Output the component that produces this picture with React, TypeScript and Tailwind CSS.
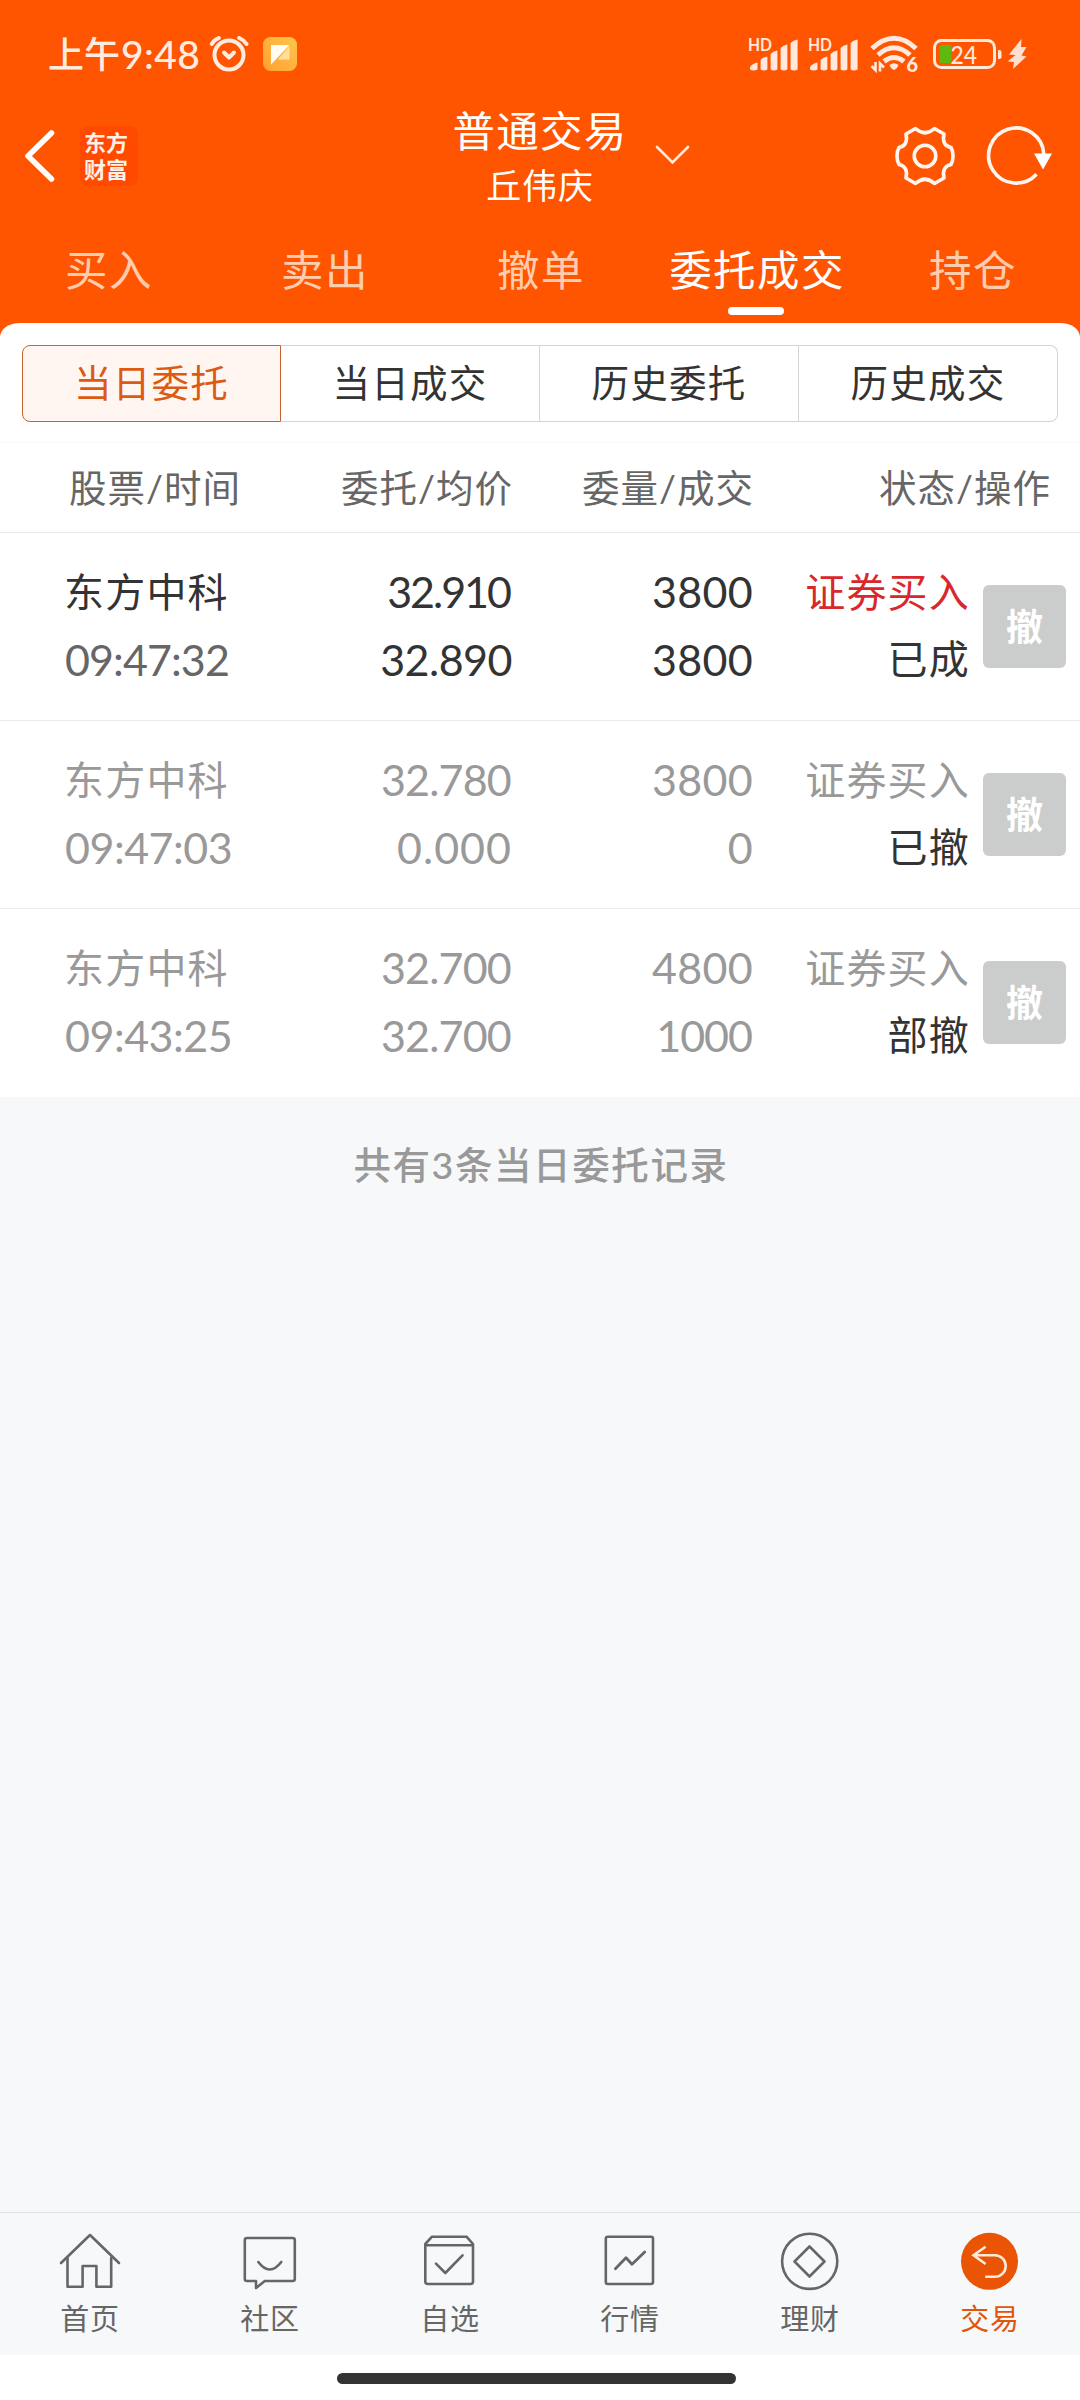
import React, { useState } from 'react';

interface Order {
  name: string;
  time: string;
  price: string;
  avg: string;
  amount: string;
  filled: string;
  status: string;
  active: boolean;
}

const orders: Order[] = [
  { name: '东方中科', time: '09:47:32', price: '32.910', avg: '32.890', amount: '3800', filled: '3800', status: '已成', active: true },
  { name: '东方中科', time: '09:47:03', price: '32.780', avg: '0.000', amount: '3800', filled: '0', status: '已撤', active: false },
  { name: '东方中科', time: '09:43:25', price: '32.700', avg: '32.700', amount: '4800', filled: '1000', status: '部撤', active: false },
];

const tabs = ['买入', '卖出', '撤单', '委托成交', '持仓'];
const segments = ['当日委托', '当日成交', '历史委托', '历史成交'];

const figureSpacing = (v: string) => {
  if (v.includes('1')) return 'tracking-[-2px] pr-[2px]';
  if (v.startsWith('0.')) return 'tracking-[1px]';
  if (v.includes('7')) return 'tracking-[-0.800px] pr-px';
  return 'tracking-[-0.500px]';
};

const Signal = () => (
  <svg width="52" height="36" viewBox="0 0 52 36" fill="#ffe8dc">
    <text x="0" y="14.500" fontSize="16.500" fontWeight="700" fontFamily="Lato" textLength="24" lengthAdjust="spacingAndGlyphs">HD</text>
    <path d="M2 33.500V31Q5 27 9.500 26.500V33.500Q5.500 35.500 2 33.500Z" />
    <path d="M12.600 33.500V24Q15 21 19.400 20.500V33.500Q16 35.500 12.600 33.500Z" />
    <path d="M22.600 33.500V18Q25 15 29.400 14.500V33.500Q26 35.500 22.600 33.500Z" />
    <path d="M32.600 33.500V12Q35 9 39.400 8.500V33.500Q36 35.500 32.600 33.500Z" />
    <path d="M42.600 33.500V7Q45 4 49.600 3.500V33.500Q46 35.500 42.600 33.500Z" />
  </svg>
);

const StatusBar = () => (
  <div className="h-[104px] flex items-center pt-1 pl-[48px] pr-[52px] text-[#ffece0]">
    <span className="text-[36px] leading-[44px] font-medium">上午</span>
    <span className="text-[39px] leading-[44px] ml-[1px] tracking-[0.400px] font-medium">9:48</span>
    <svg className="ml-[9px]" width="40" height="36" viewBox="0 0 40 36" fill="none" stroke="#ffece0" strokeWidth="4" strokeLinecap="round">
      <circle cx="20" cy="19" r="14.500" />
      <path d="M2.800 8Q5 4 9.800 2M30.200 2Q35 4 37.500 8" strokeWidth="4" />
      <path d="M15 16.500L20 21.500L25 16.500" strokeLinejoin="round" />
    </svg>
    <svg className="ml-[14px]" width="34" height="34" viewBox="0 0 34 34">
      <defs>
        <linearGradient id="note" x1="1" y1="0" x2="0" y2="1">
          <stop offset="0" stopColor="#ffc64a" />
          <stop offset="1" stopColor="#ff9f35" />
        </linearGradient>
      </defs>
      <rect width="34" height="34" rx="7.500" fill="url(#note)" />
      <path d="M26.500 9V22.500H15Z" fill="#ffdf9a" />
      <path d="M8 8H26.500L8 27.500Z" fill="#fffdf2" />
    </svg>
    <div className="ml-auto flex items-center">
      <Signal />
      <div className="w-2" />
      <Signal />
      <svg className="ml-[10px]" width="50" height="40" viewBox="0 -1 50 40" fill="none" stroke="#ffe8dc" strokeWidth="5">
        <path d="M2 13.500Q24 -7 46 13.500" />
        <path d="M8 20Q24 5.500 40 20" />
        <path d="M14 26.500Q24 18.500 34 26.500" />
        <path d="M19.500 30Q24 26.500 28.500 30Q27 34 24 35Q21 34 19.500 30Z" fill="#ffe8dc" stroke="none" />
        <path d="M5.500 27V35L1.500 31M10 36.500V28.500L14 32.500" strokeWidth="2.600" />
        <text x="36.500" y="36.500" fontSize="20" fontWeight="900" fontFamily="Lato" fill="#ffe8dc" stroke="none">6</text>
      </svg>
      <svg className="ml-[12px]" width="96" height="32" viewBox="0 0 96 32">
        <rect x="2.500" y="2.500" width="60" height="27" rx="7" fill="none" stroke="#ffe8dc" strokeWidth="3" />
        <path d="M66 12Q69.500 11.500 69.500 14V19Q69.500 21 66 21Z" fill="#ffe8dc" />
        <rect x="7.500" y="7" width="12" height="18" rx="2.500" fill="#5fb80f" />
        <text x="18.500" y="25.500" fontSize="25.500" fontFamily="Lato" fontWeight="500" fill="#ffe8dc" textLength="26.500" lengthAdjust="spacingAndGlyphs">24</text>
        <path d="M89.500 1L77 16.500L83.500 17L75.500 23.500L82 24L81 31L94.500 18.500L89.500 17.500L94.500 9L89 9Z" fill="#ffe0d0" />
      </svg>
    </div>
  </div>
);

const TitleBar = () => (
  <div className="h-[108px] grid grid-cols-3 items-center text-white">
    <div className="flex items-center pl-[22px] pb-[4px]">
      <svg width="36" height="56" viewBox="0 0 36 56" fill="none" stroke="#fff" strokeWidth="5.500" strokeLinecap="round" strokeLinejoin="round">
        <path d="M29.500 5L6 28L29.500 51" />
      </svg>
      <div className="ml-[22px] w-[58px] h-[60px] rounded-lg bg-[#ff4a00] pl-[4px] pt-[3px] text-[22px] leading-[27px] font-bold text-[#fff0e8]">
        <div>东方</div>
        <div>财富</div>
      </div>
    </div>
    <div className="relative text-center">
      <div className="text-[42.500px] leading-[54px] tracking-[1.200px]">普通交易</div>
      <div className="text-[35px] leading-[54px] tracking-[0.800px]">丘伟庆</div>
      <svg className="absolute left-[294px] top-[40px]" width="38" height="22" viewBox="0 0 38 22" fill="none" stroke="#ffefe5" strokeWidth="2.600" strokeLinecap="round">
        <path d="M3 3L18.500 18.500L34 3" />
      </svg>
    </div>
    <div className="flex items-center justify-end pr-[24px] pb-[5px]">
      <svg width="64" height="64" viewBox="-32 -32 64 64" fill="none" stroke="#fff5ee" strokeWidth="3.600" strokeLinejoin="round">
        <path d="M-9.500 -27.500Q0 -19 9.500 -27.500L19 -22Q16.500 -10.500 26 -8.500Q28 -5 28 0Q28 5 26 8.500Q16.500 10.500 19 22L9.500 27.500Q0 19 -9.500 27.500L-19 22Q-16.500 10.500 -26 8.500Q-28 5 -28 0Q-28 -5 -26 -8.500Q-16.500 -10.500 -19 -22Z" />
        <circle r="10.800" />
      </svg>
      <svg className="ml-[27px]" width="72" height="64" viewBox="-32 -32 72 64" fill="none" stroke="#fff5ee" strokeWidth="3.600">
        <path d="M20.500 18.300A27.600 27.600 0 1 1 27.800 -2" />
        <path d="M18 -2.500H36L27 13.500Z" fill="#fff" stroke="none" />
      </svg>
    </div>
  </div>
);

const navItems = [
  {
    label: '首页',
    icon: (
      <>
        <path d="M3 33L32 5L61 33" />
        <path d="M9.500 28V56.700H24.600V36H38.400V56.700H53.200V28" />
      </>
    ),
  },
  {
    label: '社区',
    icon: (
      <>
        <path d="M9 8H54.500Q56.800 8 56.800 10V49Q56.800 51 54.500 51H26.800L18 58V51H9Q6.800 51 6.800 49V10Q6.800 8 9 8Z" />
        <path d="M20.300 32Q31.600 47 43.300 32" />
      </>
    ),
  },
  {
    label: '自选',
    icon: (
      <>
        <path d="M7.300 15.300H55V51.500Q55 54 52.500 54H10Q7.300 54 7.300 51.500V14L14 6.700H48.500L55 14V15.300" />
        <path d="M18 33.700L27.300 43L44.500 25.300" />
      </>
    ),
  },
  {
    label: '行情',
    icon: (
      <>
        <rect x="7.800" y="6.700" width="47.200" height="47.300" rx="2" />
        <path d="M17.400 38.700L28 27.700L34 34.300L46.700 22" strokeWidth="2.800" />
      </>
    ),
  },
  {
    label: '理财',
    icon: (
      <>
        <circle cx="31.700" cy="31.300" r="27.600" />
        <path d="M31.500 16.500L46.500 31.500L31.500 46.500L16.500 31.500Z" />
      </>
    ),
  },
  {
    label: '交易',
    icon: (
      <>
        <circle cx="31.500" cy="31.300" r="28.500" fill="#e95504" stroke="none" />
        <path d="M27.600 16.700L15.500 25.300L27.600 34M15.500 25.300H37A10.700 10.700 0 0 1 37 46.700H27.200" stroke="#ffe9d8" strokeWidth="2.600" strokeLinecap="butt" strokeLinejoin="miter" />
      </>
    ),
  },
];

const App: React.FC = () => {
  const [tab, setTab] = useState('委托成交');
  const [segment, setSegment] = useState('当日委托');
  const [nav, setNav] = useState('交易');

  return (
    <div className="w-[1080px] h-[2400px] flex flex-col overflow-hidden bg-[#f7f8fa] font-['Lato','Noto_Sans_CJK_SC',sans-serif] text-[#333]">
      <div className="bg-[#ff5500]">
        <StatusBar />
        <TitleBar />
        <div className="h-[111px] grid grid-cols-5">
          {tabs.map(t => (
            <button key={t} onClick={() => setTab(t)} className="flex flex-col items-center pt-[28px]">
              <span className={`pl-[2px] text-[42.500px] leading-[60px] tracking-[1.400px] whitespace-nowrap ${tab === t ? 'text-white' : 'text-[#ffcdae]'}`}>{t}</span>
              {tab === t && <span className="mt-[7px] w-[56px] h-2 rounded-full bg-white" />}
            </button>
          ))}
        </div>
        <div className="h-[14px] rounded-t-[20px_14px] bg-white" />
      </div>

      <div className="bg-white px-[22px] pt-[8px] h-[106px] border-b border-[#fafafa]">
        <div className="grid grid-cols-4 h-[77px]">
          {segments.map((s, i) => (
            <button
              key={s}
              onClick={() => setSegment(s)}
              className={`border pb-[2px] text-[37.500px] leading-[60px] tracking-[1.300px] ${i === 0 ? 'rounded-l-[8px]' : 'border-l-0'} ${i === 3 ? 'rounded-r-[8px]' : ''} ${
                segment === s ? 'border-[#c8622f] bg-[#fff6f2] text-[#dc5a12]' : 'border-[#d2d5d7]'
              }`}
            >
              {s}
            </button>
          ))}
        </div>
      </div>

      <div className="bg-white h-[90px] flex items-center border-b border-[#e8e8e8] text-[37.500px] tracking-[1px] leading-[50px] text-[#666]">
        <span className="w-[271px] pl-[69px]">股票/时间</span>
        <span className="w-[242px] text-right">委托/均价</span>
        <span className="w-[241px] text-right">委量/成交</span>
        <span className="w-[297px] text-right">状态/操作</span>
      </div>

      {orders.map((o, i) => (
        <div
          key={o.time}
          className={`bg-white h-[188px] shrink-0 flex pt-[25px] text-[40px] leading-[67.500px] tracking-[1.200px] ${i < 2 ? 'border-b border-[#ebebeb]' : ''} ${o.active ? '' : 'text-[#999]'}`}
        >
          <div className="w-[271px] pl-[64px]">
            <div className="pt-px -mb-px">{o.name}</div>
            <div className={`pl-px text-[43px] ${o.active ? 'text-[#666] tracking-[-0.900px]' : 'tracking-[-0.500px]'}`}>{o.time}</div>
          </div>
          <div className="w-[241px] text-right text-[43px]">
            <div className={figureSpacing(o.price)}>{o.price}</div>
            <div className={figureSpacing(o.avg)}>{o.avg}</div>
          </div>
          <div className="w-[241px] text-right text-[43px] tracking-[0.300px]">
            <div>{o.amount}</div>
            <div className={o.filled.startsWith('1') ? 'tracking-[-1px] pr-px' : ''}>{o.filled}</div>
          </div>
          <div className="w-[217px] text-right">
            <div className={`pt-px -mb-px ${o.active ? 'text-[#d9282b]' : ''}`}>证券买入</div>
            <div className="text-[#333]">{o.status}</div>
          </div>
          <button className="ml-[13px] mt-[27px] w-[83px] h-[83px] shrink-0 rounded-[6px] bg-[#cbcccc] text-white text-[37px] leading-[82px] tracking-normal font-bold">撤</button>
        </div>
      ))}

      <div className="pt-[43px] pl-[2px] text-center text-[37.500px] leading-[50px] tracking-[1.600px] font-medium text-[#999]">共有3条当日委托记录</div>

      <div className="mt-auto h-[143px] shrink-0 grid grid-cols-6 border-t border-[#e0e2e4] bg-[#f7f8fa]">
        {navItems.map(item => (
          <button
            key={item.label}
            onClick={() => setNav(item.label)}
            className={`flex flex-col items-center pt-[17px] ${nav === item.label ? 'text-[#e0560a]' : 'text-[#666]'}`}
          >
            <svg width="64" height="64" viewBox="0 0 64 64" fill="none" stroke="currentColor" strokeWidth="2.600" strokeLinejoin="round" strokeLinecap="round">
              {item.icon}
            </svg>
            <span className="mt-[5px] text-[29px] leading-[40px] tracking-[0.800px]">{item.label}</span>
          </button>
        ))}
      </div>
      <div className="h-[45px] shrink-0 bg-white flex justify-center pt-[18px] pr-[7px]">
        <div className="w-[399px] h-[11px] rounded-full bg-[#333]" />
      </div>
    </div>
  );
};

export default App;
